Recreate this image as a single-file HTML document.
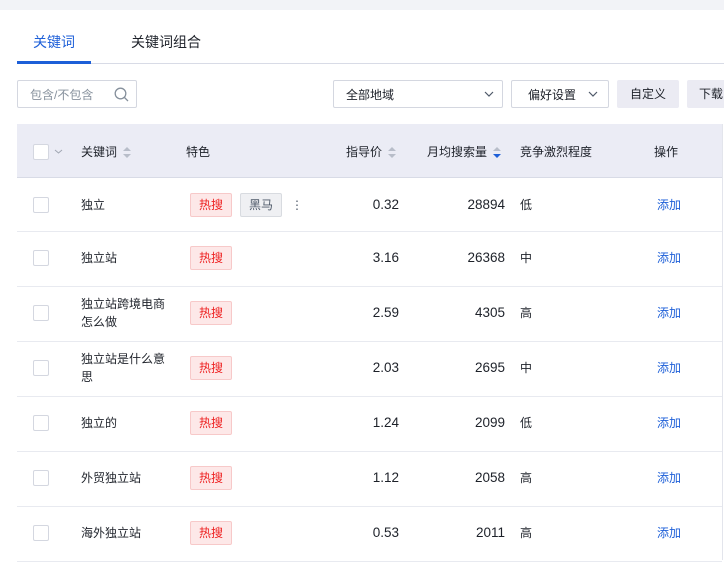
<!DOCTYPE html>
<html><head><meta charset="utf-8"><style>
*{margin:0;padding:0;box-sizing:border-box}
body{width:724px;height:560px;overflow:hidden;background:#fff;font-family:"Liberation Sans","Noto Sans CJK SC",sans-serif;font-size:12px;line-height:18px;color:#1d2129;position:relative}
.abs{position:absolute}
.top{left:0;top:0;width:724px;height:10px;background:#f2f3f7}
.tab{top:33px;font-size:14px}
.box{border:1px solid #d4d7e0;border-radius:2px;height:28px;top:80px;background:#fff}
.btn{top:80px;height:28px;background:#ebebf3;border-radius:2px;font-size:12px;line-height:28px;text-align:center}
.hdr{left:17px;top:124px;width:705px;height:54px;background:#ebecf5;border-bottom:1px solid #d8dbe6}
.cb{width:16px;height:16px;border:1px solid #d4d7e0;background:#fff;border-radius:2px}
.row{left:17px;width:705px;height:55px;border-bottom:1px solid #e8eaf0}
.tag{height:24px;line-height:22px;padding:0 8px;border-radius:2px;font-size:12px}
.hot{background:#fde8e8;border:1px solid #f7c9c9;color:#e22}
.dark{background:#eff0f3;border:1px solid #d8dbe0;color:#4e5969}
.num{font-size:13.5px}
.sort{display:inline-block;vertical-align:middle;margin-left:6px;width:8px;height:12px;position:relative}
.sort:before{content:"";position:absolute;left:0;top:0;border:4px solid transparent;border-bottom:4px solid #b8bdc9;border-top:0}
.sort:after{content:"";position:absolute;left:0;top:7px;border:4px solid transparent;border-top:4px solid #b8bdc9;border-bottom:0}
.sort.d:after{border-top-color:#1d5fd8}
</style></head><body>
<div class="abs top"></div>
<div class="abs tab" style="left:33px;color:#1d5fd8">关键词</div>
<div class="abs tab" style="left:131px;color:#1d2129">关键词组合</div>
<div class="abs" style="left:17px;top:63px;width:707px;height:1px;background:#d8dbe6"></div>
<div class="abs" style="left:17px;top:61px;width:74px;height:3px;background:#1d5fd8"></div>
<div class="abs box" style="left:17px;width:120px"><span class="abs" style="left:12px;top:5px;color:#86909c">包含/不包含</span>
<svg class="abs" style="left:96px;top:6px" width="15" height="15" viewBox="0 0 15 15"><circle cx="6.5" cy="6.5" r="5.3" fill="none" stroke="#86909c" stroke-width="1.3"/><path d="M10.5 10.5L14 14" stroke="#86909c" stroke-width="1.3"/></svg></div>
<div class="abs box" style="left:333px;width:170px"><span class="abs" style="left:12px;top:5px">全部地域</span>
<svg class="abs" style="left:150px;top:9px" width="10" height="8"><path d="M1 2l4 4 4-4" fill="none" stroke="#4e5969" stroke-width="1.2"/></svg></div>
<div class="abs box" style="left:511px;width:98px"><span class="abs" style="left:16px;top:5px">偏好设置</span>
<svg class="abs" style="left:76px;top:9px" width="10" height="8"><path d="M1 2l4 4 4-4" fill="none" stroke="#4e5969" stroke-width="1.2"/></svg></div>
<div class="abs btn" style="left:617px;width:62px">自定义</div>
<div class="abs btn" style="left:687px;width:60px;text-align:left;padding-left:12px">下载</div>
<div class="abs hdr"></div>
<div class="abs" style="left:722px;top:124px;width:1px;height:436px;background:#e3e5ec"></div>
<div class="abs cb" style="left:33px;top:144px"></div>
<svg class="abs" style="left:54px;top:148px" width="9" height="7"><path d="M1 2l3.5 3 3.5-3" fill="none" stroke="#a0a6b2" stroke-width="1"/></svg>
<div class="abs" style="left:81px;top:143px">关键词<span class="sort"></span></div>
<div class="abs" style="left:186px;top:143px">特色</div>
<div class="abs" style="left:346px;top:143px">指导价<span class="sort"></span></div>
<div class="abs" style="left:427px;top:143px">月均搜索量<span class="sort d"></span></div>
<div class="abs" style="left:520px;top:143px">竞争激烈程度</div>
<div class="abs" style="left:654px;top:143px">操作</div>

<div id="rows"></div>
<script>
var d=[["独立","0.32","28894","低",1],["独立站","3.16","26368","中"],["独立站跨境电商<br>怎么做","2.59","4305","高"],["独立站是什么意<br>思","2.03","2695","中"],["独立的","1.24","2099","低"],["外贸独立站","1.12","2058","高"],["海外独立站","0.53","2011","高"]];
var h="";d.forEach(function(r,i){var t=177+i*55,c=t+26;if(i==0)c=205;var two=r[0].indexOf("<br>")>0;
h+='<div class="abs row" style="top:'+t+'px"></div>';
h+='<div class="abs cb" style="left:33px;top:'+(c-8)+'px"></div>';
h+='<div class="abs" style="left:81px;top:'+(c-(two?18:9))+'px">'+r[0]+'</div>';
h+='<div class="abs tag hot" style="left:190px;top:'+(c-12)+'px">热搜</div>';
if(r[4])h+='<div class="abs tag dark" style="left:240px;top:'+(c-12)+'px">黑马</div><div class="abs" style="left:291px;top:'+(c-9)+'px;color:#4e5969">⋮</div>';
h+='<div class="abs num" style="right:325px;top:'+(c-9)+'px">'+r[1]+'</div>';
h+='<div class="abs num" style="right:219px;top:'+(c-9)+'px">'+r[2]+'</div>';
h+='<div class="abs" style="left:520px;top:'+(c-9)+'px">'+r[3]+'</div>';
h+='<div class="abs" style="left:657px;top:'+(c-9)+'px;color:#1d5fd8">添加</div>';});
document.getElementById("rows").innerHTML=h;
</script>
</body></html>
